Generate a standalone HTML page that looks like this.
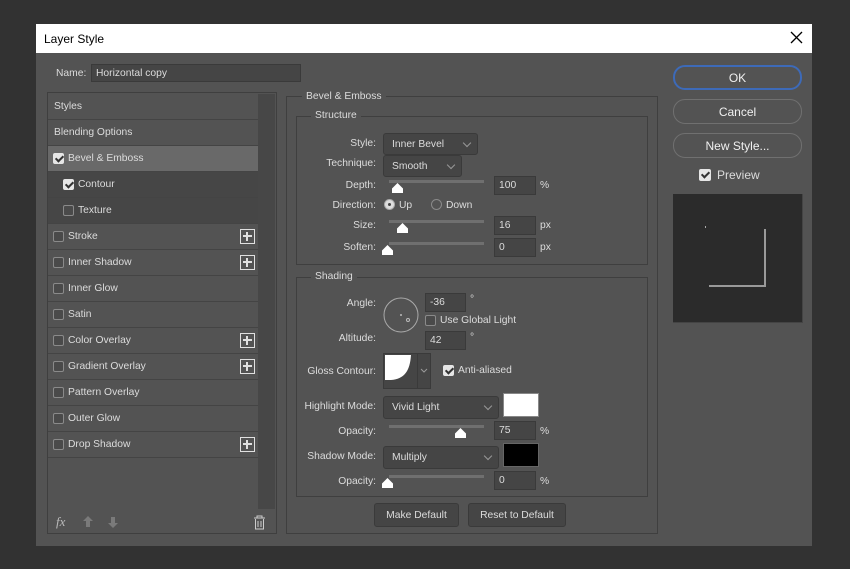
<!DOCTYPE html>
<html><head><meta charset="utf-8"><style>
*{box-sizing:border-box;margin:0;padding:0}
body{width:850px;height:569px;background:#323232;font-family:"Liberation Sans",sans-serif;font-size:10.3px;color:#dcdcdc;position:relative;overflow:hidden}
.a{position:absolute}
.dlg{left:36px;top:24px;width:776px;height:522px;background:#535353}
.title{left:36px;top:24px;width:776px;height:29px;background:#fff;color:#000;font-size:12px;padding:8px 0 0 8px}
.row{position:absolute;left:48px;width:210px;height:26px;border-bottom:1px solid #444;padding:7px 0 0 6px}
.cb{position:absolute;width:11px;height:11px;border:1px solid #8a8a8a;border-radius:2px;background:#4a4a4a}
.cb.on{background:#e6e6e6;border-color:#e6e6e6}
.cb.on:after{content:"";position:absolute;left:3px;top:0px;width:3px;height:6px;border:solid #333;border-width:0 2px 2px 0;transform:rotate(45deg)}
.plus{position:absolute;left:192px;top:5px;width:15px;height:15px;border:1px solid #e0e0e0}
.plus:before{content:"";position:absolute;top:2px;width:1px;height:9px;background:#e0e0e0;border-left:1px solid #e0e0e0;left:5px}
.plus:after{content:"";position:absolute;left:2px;top:5px;width:9px;height:2px;background:#e0e0e0}
.box{position:absolute;border:1px solid #3f3f3f}
.lg{position:absolute;background:#535353;padding:0 4px}
.lbl{position:absolute;text-align:right;width:90px}
.dd{position:absolute;background:#454545;border:1px solid #3a3a3a;border-radius:3px;padding:5px 0 0 8px}
.dd:after{content:"";position:absolute;right:7px;top:6px;width:5px;height:5px;border:solid #999;border-width:0 1px 1px 0;transform:rotate(45deg)}
.inp{position:absolute;background:#454545;border:1px solid #3a3a3a;padding:3px 0 0 4px;height:19px}
.trk{position:absolute;height:3px;background:#6f6f6f;width:95px}
.th{position:absolute;width:11px;height:10px;background:#fff;clip-path:polygon(50% 0,100% 55%,100% 100%,0 100%,0 55%)}
.btn{position:absolute;border:1px solid #707070;border-radius:12px;text-align:center;font-size:12px;padding-top:5px;color:#f0f0f0}
.sbtn{position:absolute;background:#454545;border:1px solid #3a3a3a;border-radius:3px;text-align:center;padding-top:6px;height:24px}
</style></head><body>
<div class="a dlg"></div>
<div class="a title">Layer Style</div>
<svg class="a" style="left:790px;top:31px" width="13" height="13"><path d="M1 1L12 12M12 1L1 12" stroke="#000" stroke-width="1.3"/></svg>

<div class="a" style="left:56px;top:68px">Name:</div>
<div class="a" style="left:91px;top:64px;width:210px;height:18px;background:#454545;border:1px solid #3a3a3a;padding:3px 0 0 4px">Horizontal copy</div>

<div class="box" style="left:47px;top:92px;width:230px;height:442px"></div>
<div class="a" style="left:258px;top:94px;width:17px;height:415px;background:#474747"></div>
<div class="row" style="top:94px">Styles</div>
<div class="row" style="top:120px">Blending Options</div>
<div class="row" style="top:146px;background:#696969"><span class="cb on" style="left:5px;top:7px"></span><span style="position:absolute;left:20px">Bevel &amp; Emboss</span></div>
<div class="row" style="top:172px;background:#464646"><span class="cb on" style="left:15px;top:7px"></span><span style="position:absolute;left:30px">Contour</span></div>
<div class="row" style="top:198px;background:#464646"><span class="cb" style="left:15px;top:7px"></span><span style="position:absolute;left:30px">Texture</span></div>
<div class="row" style="top:224px"><span class="cb" style="left:5px;top:7px"></span><span style="position:absolute;left:20px">Stroke</span><span class="plus"></span></div>
<div class="row" style="top:250px"><span class="cb" style="left:5px;top:7px"></span><span style="position:absolute;left:20px">Inner Shadow</span><span class="plus"></span></div>
<div class="row" style="top:276px"><span class="cb" style="left:5px;top:7px"></span><span style="position:absolute;left:20px">Inner Glow</span></div>
<div class="row" style="top:302px"><span class="cb" style="left:5px;top:7px"></span><span style="position:absolute;left:20px">Satin</span></div>
<div class="row" style="top:328px"><span class="cb" style="left:5px;top:7px"></span><span style="position:absolute;left:20px">Color Overlay</span><span class="plus"></span></div>
<div class="row" style="top:354px"><span class="cb" style="left:5px;top:7px"></span><span style="position:absolute;left:20px">Gradient Overlay</span><span class="plus"></span></div>
<div class="row" style="top:380px"><span class="cb" style="left:5px;top:7px"></span><span style="position:absolute;left:20px">Pattern Overlay</span></div>
<div class="row" style="top:406px"><span class="cb" style="left:5px;top:7px"></span><span style="position:absolute;left:20px">Outer Glow</span></div>
<div class="row" style="top:432px"><span class="cb" style="left:5px;top:7px"></span><span style="position:absolute;left:20px">Drop Shadow</span><span class="plus"></span></div>
<div class="a" style="left:56px;top:514px;font-style:italic;font-size:13px;color:#bbb;font-family:'Liberation Serif',serif">fx</div>
<svg class="a" style="left:82px;top:515px" width="40" height="14"><path d="M6 1L11 6H8V12H4V6H1Z" fill="#7a7a7a"/><path d="M31 13L36 8H33V2H29V8H26Z" fill="#7a7a7a"/></svg>
<svg class="a" style="left:253px;top:515px" width="13" height="15"><path d="M1 3H12M4 3V1H9V3M2.5 4V14H10.5V4M5 6V12M8 6V12" stroke="#ccc" fill="none"/></svg>

<div class="box" style="left:286px;top:96px;width:372px;height:438px"></div>
<div class="lg" style="left:302px;top:91px">Bevel &amp; Emboss</div>
<div class="box" style="left:296px;top:116px;width:352px;height:149px"></div>
<div class="lg" style="left:311px;top:110px">Structure</div>
<div class="lbl" style="left:286px;top:138px">Style:</div>
<div class="dd" style="left:383px;top:133px;width:95px;height:22px">Inner Bevel</div>
<div class="lbl" style="left:286px;top:158px">Technique:</div>
<div class="dd" style="left:383px;top:155px;width:79px;height:22px">Smooth</div>
<div class="lbl" style="left:286px;top:180px">Depth:</div>
<div class="trk" style="left:389px;top:180px"></div><div class="th" style="left:392px;top:183px"></div>
<div class="inp" style="left:494px;top:176px;width:42px">100</div><div class="a" style="left:540px;top:180px">%</div>
<div class="lbl" style="left:286px;top:200px">Direction:</div>
<div class="a" style="left:384px;top:199px;width:11px;height:11px;border-radius:50%;background:#ddd;border:1px solid #aaa"><div style="position:absolute;left:3px;top:3px;width:3px;height:3px;border-radius:50%;background:#444"></div></div>
<div class="a" style="left:399px;top:200px">Up</div>
<div class="a" style="left:431px;top:199px;width:11px;height:11px;border-radius:50%;border:1px solid #8a8a8a"></div>
<div class="a" style="left:446px;top:200px">Down</div>
<div class="lbl" style="left:286px;top:220px">Size:</div>
<div class="trk" style="left:389px;top:220px"></div><div class="th" style="left:397px;top:223px"></div>
<div class="inp" style="left:494px;top:216px;width:42px">16</div><div class="a" style="left:540px;top:220px">px</div>
<div class="lbl" style="left:286px;top:242px">Soften:</div>
<div class="trk" style="left:389px;top:242px"></div><div class="th" style="left:382px;top:245px"></div>
<div class="inp" style="left:494px;top:238px;width:42px">0</div><div class="a" style="left:540px;top:242px">px</div>

<div class="box" style="left:296px;top:277px;width:352px;height:220px"></div>
<div class="lg" style="left:311px;top:271px">Shading</div>
<div class="lbl" style="left:286px;top:298px">Angle:</div>
<svg class="a" style="left:382px;top:296px" width="38" height="38"><circle cx="19" cy="19" r="17" stroke="#aaa" fill="none"/><circle cx="19" cy="19" r="1" fill="#bbb"/><circle cx="26" cy="24" r="1.5" stroke="#bbb" fill="none"/></svg>
<div class="inp" style="left:425px;top:293px;width:41px">-36</div><div class="a" style="left:470px;top:294px">°</div>
<div class="cb" style="left:425px;top:315px"></div><div class="a" style="left:440px;top:315px">Use Global Light</div>
<div class="lbl" style="left:286px;top:333px">Altitude:</div>
<div class="inp" style="left:425px;top:331px;width:41px">42</div><div class="a" style="left:470px;top:332px">°</div>
<div class="lbl" style="left:286px;top:366px">Gloss Contour:</div>
<div class="a" style="left:383px;top:353px;width:48px;height:36px;border:1px solid #3a3a3a;background:#454545"></div>
<svg class="a" style="left:385px;top:355px" width="32" height="32"><path d="M0 0H26C25 15 20 24 6 25H0Z" fill="#fff"/></svg>
<div class="a" style="left:417px;top:354px;width:1px;height:34px;background:#3a3a3a"></div>
<svg class="a" style="left:420px;top:368px" width="8" height="6"><path d="M1 1L4 4L7 1" stroke="#999" fill="none"/></svg>
<div class="cb on" style="left:443px;top:365px"></div><div class="a" style="left:458px;top:365px">Anti-aliased</div>
<div class="lbl" style="left:286px;top:401px">Highlight Mode:</div>
<div class="dd" style="left:383px;top:396px;width:116px;height:23px">Vivid Light</div>
<div class="a" style="left:503px;top:393px;width:36px;height:24px;background:#fff;border:1px solid #888"></div>
<div class="lbl" style="left:286px;top:426px">Opacity:</div>
<div class="trk" style="left:389px;top:425px"></div><div class="th" style="left:455px;top:428px"></div>
<div class="inp" style="left:494px;top:421px;width:42px">75</div><div class="a" style="left:540px;top:426px">%</div>
<div class="lbl" style="left:286px;top:451px">Shadow Mode:</div>
<div class="dd" style="left:383px;top:446px;width:116px;height:23px">Multiply</div>
<div class="a" style="left:503px;top:443px;width:36px;height:24px;background:#000;border:1px solid #666"></div>
<div class="lbl" style="left:286px;top:476px">Opacity:</div>
<div class="trk" style="left:389px;top:475px"></div><div class="th" style="left:382px;top:478px"></div>
<div class="inp" style="left:494px;top:471px;width:42px">0</div><div class="a" style="left:540px;top:476px">%</div>

<div class="sbtn" style="left:374px;top:503px;width:85px">Make Default</div>
<div class="sbtn" style="left:468px;top:503px;width:98px">Reset to Default</div>

<div class="btn" style="left:673px;top:65px;width:129px;height:25px;border-color:#3d6ab8;border-width:2px;padding-top:4px">OK</div>
<div class="btn" style="left:673px;top:99px;width:129px;height:25px">Cancel</div>
<div class="btn" style="left:673px;top:133px;width:129px;height:25px">New Style...</div>
<div class="cb on" style="left:699px;top:169px;width:12px;height:12px"></div>
<div class="a" style="left:717px;top:168px;font-size:12px">Preview</div>
<div class="a" style="left:673px;top:194px;width:130px;height:129px;background:#2b2b2b;border-right:1px solid #444;border-bottom:1px solid #444"></div>
<div class="a" style="left:705px;top:226px;width:1px;height:2px;background:#aaa"></div>
<div class="a" style="left:764px;top:229px;width:2px;height:58px;background:#999"></div>
<div class="a" style="left:709px;top:285px;width:57px;height:2px;background:#999"></div>
</body></html>
